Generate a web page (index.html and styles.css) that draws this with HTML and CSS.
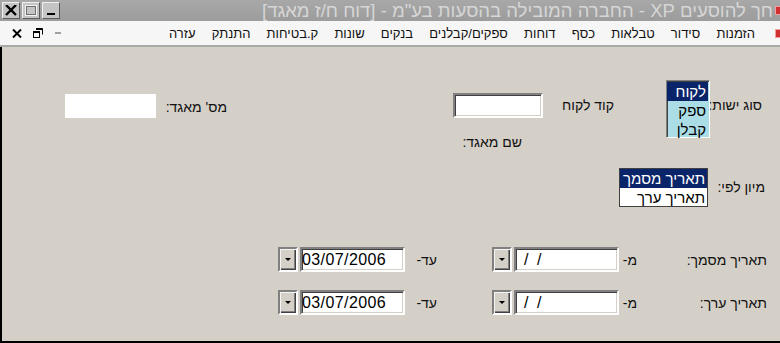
FILE: index.html
```html
<!DOCTYPE html>
<html lang="he">
<head>
  <meta charset="UTF-8">
  <title>דוח ח/ז מאגד</title>
  <link rel="stylesheet" href="styles.css">
</head>
<body>

<div class="window">
  <div class="titlebar">
    <div class="winbtns">
      <span class="wbtn">
        <svg width="12" height="11" viewBox="0 0 12 11"><path d="M1 0 L11 10 M11 0 L1 10" stroke="#000" stroke-width="2.4"/></svg>
      </span>
      <span class="wbtn">
        <svg width="12" height="11" viewBox="0 0 12 11"><rect x="0.5" y="0.5" width="11" height="10" fill="none" stroke="#f2f2f2"/><rect x="1.5" y="1.5" width="9" height="8" fill="none" stroke="#707070"/></svg>
      </span>
      <span class="wbtn">
        <svg width="12" height="11" viewBox="0 0 12 11"><rect x="2" y="8" width="8" height="2" fill="#000"/></svg>
      </span>
    </div>
    <div class="title">חך להוסעים XP - החברה המובילה בהסעות בע"מ - [דוח ח/ז מאגד]</div>
    <span class="appicon"></span>
  </div>

  <div class="menubar">
    <div class="mdibtns">
      <svg width="10" height="9" viewBox="0 0 10 9"><path d="M1 0.5 L9 8.5 M9 0.5 L1 8.5" stroke="#000" stroke-width="2"/></svg>
      <svg width="10" height="10" viewBox="0 0 10 10"><path d="M3 0.5 H9.5 V6.5 M3 1.5 H9.5" stroke="#000" fill="none"/><rect x="0.5" y="3.5" width="6" height="6" fill="none" stroke="#000"/><path d="M0.5 4.5 H6.5" stroke="#000"/></svg>
      <svg width="8" height="4" viewBox="0 0 8 4"><rect x="1" y="1" width="6" height="2" fill="#a0a0a0"/></svg>
    </div>
    <nav class="menu">
      <span>הזמנות</span>
      <span>סידור</span>
      <span>טבלאות</span>
      <span>כסף</span>
      <span>דוחות</span>
      <span>ספקים/קבלנים</span>
      <span>בנקים</span>
      <span>שונות</span>
      <span>ק.בטיחות</span>
      <span>התנתק</span>
      <span>עזרה</span>
    </nav>
    <span class="appicon"></span>
  </div>

  <div class="form">
    <div class="row row-a">
      <span class="lbl lbl-type">סוג ישות:</span>
      <div class="listbox lb-type">
        <div class="opt sel">לקוח</div>
        <div class="opt">ספק</div>
        <div class="opt">קבלן</div>
      </div>
      <span class="lbl lbl-code">קוד לקוח</span>
      <div class="code-col">
        <div class="textbox code-box"></div>
        <span class="lbl lbl-group-name">שם מאגד:</span>
      </div>
      <span class="lbl lbl-group-no">מס' מאגד:</span>
      <div class="flatbox"></div>
    </div>

    <div class="row row-b">
      <span class="lbl lbl-sort">מיון לפי:</span>
      <div class="listbox lb-sort">
        <div class="opt sel">תאריך מסמך</div>
        <div class="opt">תאריך ערך</div>
      </div>
    </div>

    <div class="row row-date">
      <span class="lbl lbl-date">תאריך מסמך:</span>
      <span class="lbl lbl-from">מ-</span>
      <div class="textbox datebox"><span class="mask">/ /</span></div>
      <span class="dropbtn"><i></i></span>
      <span class="lbl lbl-to">עד-</span>
      <div class="textbox datebox"><span>03/07/2006</span></div>
      <span class="dropbtn"><i></i></span>
    </div>

    <div class="row row-date second">
      <span class="lbl lbl-date">תאריך ערך:</span>
      <span class="lbl lbl-from">מ-</span>
      <div class="textbox datebox"><span class="mask">/ /</span></div>
      <span class="dropbtn"><i></i></span>
      <span class="lbl lbl-to">עד-</span>
      <div class="textbox datebox"><span>03/07/2006</span></div>
      <span class="dropbtn"><i></i></span>
    </div>
  </div>
</div>

</body>
</html>
```

FILE: styles.css
```css
html, body {
  margin: 0;
  padding: 0;
  background: #d4d0c8;
  font-family: 'Liberation Sans', 'DejaVu Sans', sans-serif;
  overflow: hidden;
}

.window {
  width: 780px;
  height: 343px;
  display: flex;
  flex-direction: column;
  background: #d4d0c8;
}

/* title bar */
.titlebar {
  height: 21px;
  display: flex;
  align-items: center;
  background: linear-gradient(#a8a8a8, #9c9c9c);
  direction: ltr;
}

.winbtns {
  display: flex;
  gap: 2px;
  padding-left: 2px;
}

.wbtn {
  width: 16px;
  height: 15px;
  display: flex;
  align-items: center;
  justify-content: center;
  background: #c4c4c4;
  border: 1px solid #f0f0f0;
  border-right-color: #5a5a5a;
  border-bottom-color: #5a5a5a;
}

.title {
  flex: 1;
  direction: rtl;
  text-align: right;
  font-size: 18.5px;
  line-height: 21px;
  color: #d6d6d6;
  white-space: nowrap;
  overflow: hidden;
  padding-right: 2px;
}

.appicon {
  width: 4px;
  height: 7px;
  background: #d03030;
  border: 1px solid #f0a0a0;
  border-right: none;
}

/* menu bar */
.menubar {
  height: 24px;
  display: flex;
  align-items: center;
  background: #f6f6f6;
  border-bottom: 2px solid #a8a8a8;
  direction: ltr;
}

.mdibtns {
  display: flex;
  align-items: center;
  gap: 11px;
  padding-left: 12px;
}

.menu {
  flex: 1;
  display: flex;
  direction: rtl;
  gap: 16.2px;
  padding-right: 20px;
  font-size: 13px;
  color: #111;
}

/* form area */
.form {
  flex: 1;
  direction: rtl;
  border-left: 2px solid #000;
  border-bottom: 2px solid #000;
  padding: 33px 15px 0 0;
}

.row {
  display: flex;
  align-items: flex-start;
}

.lbl {
  font-size: 14px;
  line-height: 16px;
  color: #111;
  white-space: nowrap;
}

.row-a {
  height: 70px;
}

.lbl-type {
  width: 52px;
  padding-right: 3px;
  margin-top: 17px;
}

.listbox {
  background: #fff;
  border: 1px solid #808080;
  border-right-color: #fff;
  border-bottom-color: #fff;
  box-shadow: inset 1px 1px 0 #404040;
  padding: 1px 1px 0 0;
  font-size: 15px;
}

.opt {
  height: 19px;
  line-height: 19px;
  padding-right: 2px;
}

.opt.sel {
  background: #0a246a;
  color: #fff;
}

.lb-type {
  width: 41px;
  height: 55px;
  background: #abdde6;
}

.lbl-code {
  width: 71px;
  margin-right: 52px;
  margin-top: 17px;
}

.code-col {
  width: 90px;
  margin-top: 13px;
  display: flex;
  flex-direction: column;
}

.textbox {
  height: 21px;
  background: #fff;
  border: 2px solid;
  border-color: #808080 #fff #fff #808080;
  box-shadow: inset 1px 1px 0 #404040, inset -1px -1px 0 #d4d0c8;
}

.code-box {
  width: 86px;
}

.lbl-group-name {
  padding-right: 21px;
  margin-top: 16px;
}

.lbl-group-no {
  width: 71px;
  margin-right: 226px;
  margin-top: 19px;
}

.flatbox {
  width: 91px;
  height: 24px;
  margin-top: 14px;
  background: #fff;
}

.row-b {
  margin-top: 18px;
  height: 39px;
}

.lbl-sort {
  width: 57px;
  margin-top: 11px;
}

.lb-sort {
  width: 87px;
  height: 37px;
  border-color: #404040;
  box-shadow: none;
  padding: 0;
}

.row-date {
  margin-top: 40px;
  height: 25px;
  align-items: center;
}

.row-date.second {
  margin-top: 18px;
}

.lbl-date {
  width: 128px;
  margin-right: -2px;
}

.lbl-from {
  width: 20px;
  padding-right: 2px;
  box-sizing: border-box;
}

.datebox {
  width: 101px;
  direction: ltr;
  font-size: 16px;
  letter-spacing: 0.4px;
  line-height: 21px;
}

.datebox .mask {
  padding-left: 8px;
  letter-spacing: 2px;
}

/* date picker button: sunken frame around a raised face */
.dropbtn {
  width: 16px;
  height: 21px;
  margin-right: 2px;
  display: flex;
  align-items: center;
  justify-content: center;
  background: #d4d0c8;
  border: 2px solid;
  border-color: #808080 #fff #fff #808080;
  box-shadow: inset 1px 1px 0 #f4f4f4, inset -1px -1px 0 #404040, inset -2px -2px 0 #808080;
}

.dropbtn i {
  width: 0;
  height: 0;
  margin-top: -1px;
  border-left: 3px solid transparent;
  border-right: 3px solid transparent;
  border-top: 3px solid #000;
}

.lbl-to {
  width: 87px;
  padding-right: 55px;
  box-sizing: border-box;
}
```
